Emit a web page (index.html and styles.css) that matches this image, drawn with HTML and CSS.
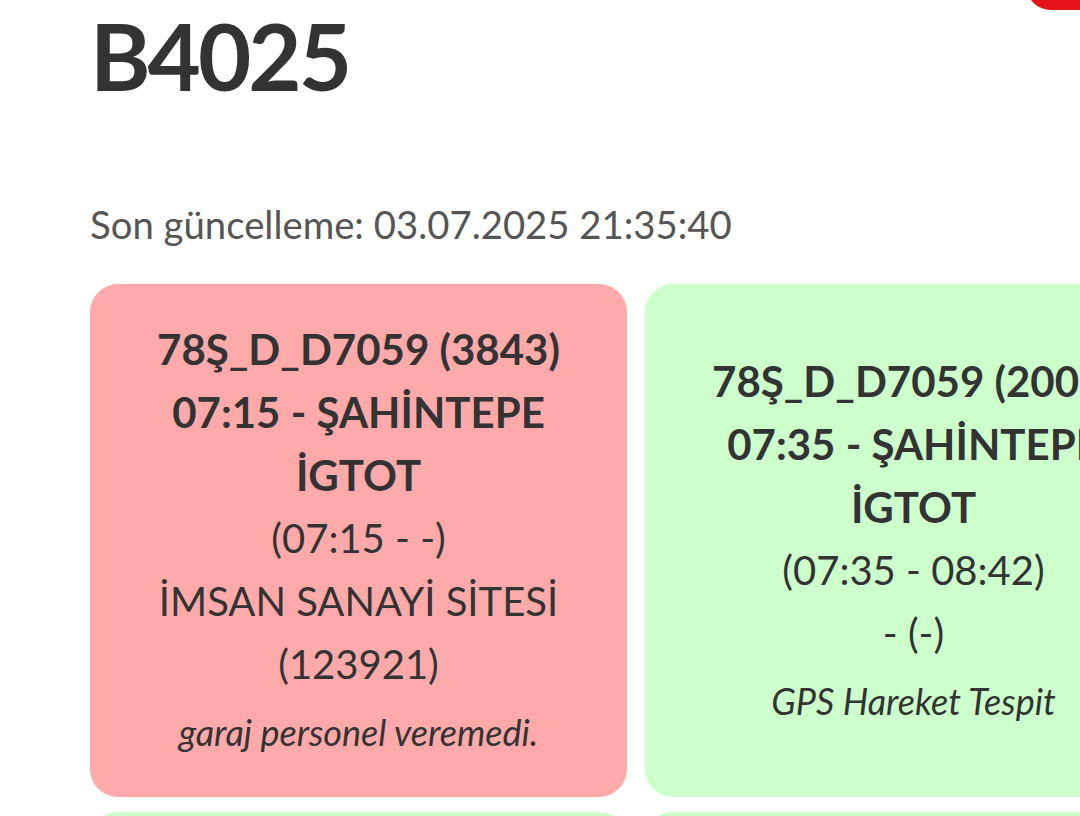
FILE: index.html
```html
<!DOCTYPE html>
<html lang="tr">
<head>
<meta charset="utf-8">
<link rel="stylesheet" href="styles.css">
</head>
<body>
<div class="badge"></div>
<main class="page">
  <h1 class="title">B4025</h1>
  <p class="updated">Son güncelleme: 03.07.2025 21:35:40</p>
  <section class="grid">
    <div class="card red">
      <div class="bold">78Ş_D_D7059 (3843)</div>
      <div class="bold">07:15 - ŞAHİNTEPE</div>
      <div class="bold">İGTOT</div>
      <div>(07:15 - -)</div>
      <div>İMSAN SANAYİ SİTESİ</div>
      <div>(123921)</div>
      <div class="note">garaj personel veremedi.</div>
    </div>
    <div class="card green">
      <div class="bold">78Ş_D_D7059 (2002)</div>
      <div class="bold">07:35 - ŞAHİNTEPE</div>
      <div class="bold">İGTOT</div>
      <div>(07:35 - 08:42)</div>
      <div>- (-)</div>
      <div class="note">GPS Hareket Tespit</div>
    </div>
    <div class="card green">
      <div class="bold">78Ş_D_D7059 (2003)</div>
      <div class="bold">07:55 - ŞAHİNTEPE</div>
    </div>
    <div class="card green">
      <div class="bold">78Ş_D_D7059 (2004)</div>
      <div class="bold">08:15 - ŞAHİNTEPE</div>
    </div>
  </section>
</main>
</body>
</html>
```

FILE: styles.css
```css
html, body {
  margin: 0;
  padding: 0;
  background: #ffffff;
  overflow: hidden;
  height: 816px;
}

body {
  font-family: Lato, "Noto Sans", sans-serif;
  color: #333333;
  position: relative;
}

.badge {
  position: absolute;
  top: -40px;
  left: 1026px;
  width: 120px;
  height: 50px;
  border-radius: 26px;
  background: #e3131b;
}

.page {
  padding-left: 90px;
}

.title {
  margin: 0;
  padding-top: 4px;
  font-size: 92px;
  font-weight: 700;
  line-height: 104px;
  letter-spacing: -3px;
  color: #333333;
}

.updated {
  margin: 90px 0 0 0;
  font-size: 38.3px;
  line-height: 52px;
  color: #555555;
}

.grid {
  display: grid;
  grid-template-columns: 537px 537px;
  column-gap: 18px;
  row-gap: 15px;
  margin-top: 34px;
}

.card {
  border-radius: 28px;
  padding: 34px 20px 41px;
  display: flex;
  flex-direction: column;
  justify-content: center;
  text-align: center;
  font-size: 40px;
  line-height: 63px;
  color: #333333;
}

.red {
  background: #ffaaaa;
}

.green {
  background: #ccffcc;
}

.bold {
  font-size: 42px;
  font-weight: 700;
}

.note {
  font-style: italic;
  font-size: 36px;
  line-height: 48px;
  margin-top: 12px;
}
```
